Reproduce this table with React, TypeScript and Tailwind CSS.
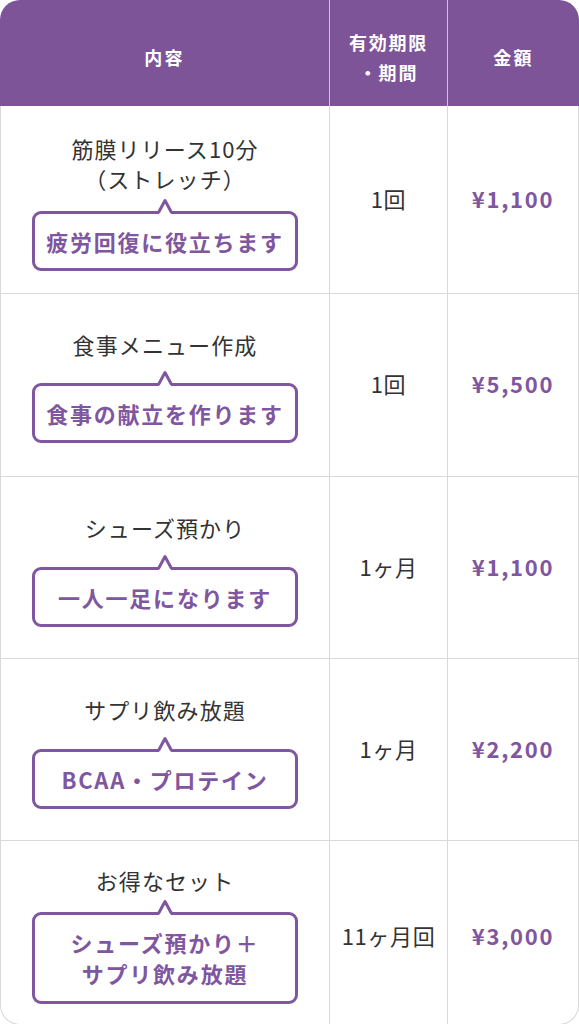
import React from "react";

type Row = {
  h: string;
  pt: string;
  mt: string;
  title: string[];
  bubble: string[];
  term: string;
  price: string;
  termPt?: string;
};

const rows: Row[] = [
  { h: "h-[188px]", pt: "pt-[27px]", mt: "mt-[18px]", title: ["筋膜リリース10分", "（ストレッチ）"], bubble: ["疲労回復に役立ちます"], term: "1回", price: "¥1,100" },
  { h: "h-[183px]", pt: "pt-[35px]", mt: "mt-[24px]", title: ["食事メニュー作成"], bubble: ["食事の献立を作ります"], term: "1回", price: "¥5,500" },
  { h: "h-[182px]", pt: "pt-[35px]", mt: "mt-[25px]", title: ["シューズ預かり"], bubble: ["一人一足になります"], term: "1ヶ月", price: "¥1,100" },
  { h: "h-[182px]", pt: "pt-[35px]", mt: "mt-[25px]", title: ["サプリ飲み放題"], bubble: ["BCAA・プロテイン"], term: "1ヶ月", price: "¥2,200" },
  { h: "h-[183px]", pt: "pt-[24px]", mt: "mt-[17px]", title: ["お得なセット"], bubble: ["シューズ預かり＋", "サプリ飲み放題"], term: "11ヶ月回", price: "¥3,000", termPt: "pt-[8px]" },
];

function Bubble({ lines }: { lines: string[] }) {
  return (
    <div className="relative w-[266px] rounded-[9px] border-[3px] border-[#7f56a0] bg-white py-[12px] text-center">
      <svg
        className="absolute left-1/2 top-[-16px] -translate-x-1/2"
        width="20"
        height="16"
        viewBox="0 0 20 16"
      >
        <polygon points="3.5,17 10,3 16.5,17" fill="white" />
        <polyline
          points="3.5,14.5 10,2.5 16.5,14.5"
          fill="none"
          stroke="#7f56a0"
          strokeWidth="3"
          strokeLinejoin="round"
        />
      </svg>
      {lines.map((l, i) => (
        <div
          key={i}
          className={`text-[22px] font-bold tracking-[0.08em] text-[#7f56a0] ${lines.length > 1 ? "leading-[31px]" : "leading-[30px]"}`}
        >
          {l}
        </div>
      ))}
    </div>
  );
}

export default function App() {
  return (
    <div className="w-[579px] bg-white font-['Noto_Sans_CJK_JP','Noto_Sans',sans-serif]">
      <div className="grid h-[106px] grid-cols-[329px_118px_1fr] rounded-t-[20px] bg-[#7e5499] text-white">
        <div className="flex items-center justify-center pt-[8px] text-[18px] font-bold tracking-[0.12em]">
          内容
        </div>
        <div className="flex flex-col items-center justify-center border-l border-[#cfc3d8] pt-[8px] text-[18px] font-bold leading-[30px] tracking-[0.1em]">
          <div>有効期限</div>
          <div>・期間</div>
        </div>
        <div className="flex items-center justify-center border-l border-[#cfc3d8] pt-[8px] text-[18px] font-bold tracking-[0.12em]">
          金額
        </div>
      </div>
      <div className="overflow-hidden rounded-b-[20px] border-x border-b border-[#d9d9d9]">
        {rows.map((r, i) => (
          <div
            key={i}
            className={`grid grid-cols-[328px_118px_1fr] ${r.h} ${i < rows.length - 1 ? "border-b border-[#d9d9d9]" : ""}`}
          >
            <div className={`flex flex-col items-center ${r.pt}`}>
              {r.title.map((t, j) => (
                <div key={j} className="text-[22px] leading-[30px] tracking-[0.05em] text-[#333333]">
                  {t}
                </div>
              ))}
              <div className={r.mt}>
                <Bubble lines={r.bubble} />
              </div>
            </div>
            <div className={`flex items-center justify-center border-l border-[#d9d9d9] pb-[3px] text-[22px] tracking-[0.03em] text-[#333333] ${r.termPt ?? ""}`}>
              {r.term}
            </div>
            <div className={`flex items-center justify-center border-l border-[#d9d9d9] pb-[3px] text-[22px] font-bold tracking-[0.08em] text-[#7f56a0] ${r.termPt ?? ""}`}>
              {r.price}
            </div>
          </div>
        ))}
      </div>
    </div>
  );
}
